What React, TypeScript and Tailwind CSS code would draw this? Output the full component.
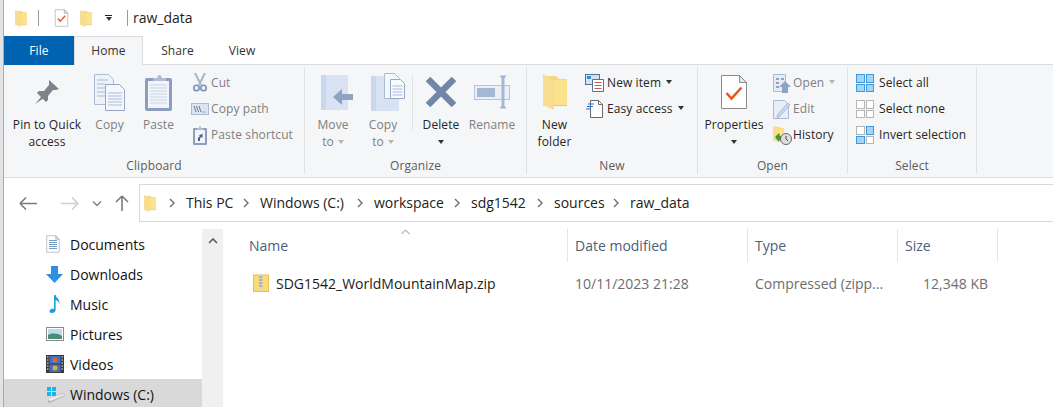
import React from 'react';

const Folder = ({ className }: { className: string }) => (
  <svg viewBox="0 0 24 36" className={className}>
    <path d="M0 2h13l3 3h8v27H0z" fill="#f6d67c" />
    <path d="M11 6h13v26H11z" fill="#fde28c" />
    <path d="M0 0l11 6v30L0 31z" fill="#f7dc91" />
    <path d="M11 31h13v1H11z" fill="#e9c568" />
  </svg>
);

const Doc = ({ className, children }: { className: string; children?: React.ReactNode }) => (
  <svg viewBox="0 0 28 36" className={className}>
    <path d="M1.5 1.5h18l7 7v26h-25z" fill="#fff" stroke="#8b8b8b" />
    <path d="M19.5 1.5v7h7z" fill="#e6e6e6" stroke="#8b8b8b" />
    {children}
  </svg>
);

const Check = ({ className }: { className: string }) => (
  <Doc className={className}>
    <path d="M6.5 19l5 5.5 10-11" fill="none" stroke="#e8591f" strokeWidth="2.6" />
  </Doc>
);

const Pin = () => (
  <svg viewBox="0 0 26 26" className="h-[26px] w-[26px]">
    <path d="M15 1l10 9-3 1-3 0-5 6 0 4-2 2-9-9 2-2 5 0 5-6 0-3z" fill="#7d838b" />
    <path d="M8 17l-7 8 9-6z" fill="#7d838b" />
  </svg>
);

const CopyIcon = () => (
  <svg viewBox="0 0 32 37" className="h-[37px] w-[32px]">
    <path d="M.5.5h14l5 5v25H.5z" fill="#eef2f9" stroke="#a9bbd6" />
    <path d="M11.5 10.5h14l5 5v21h-19z" fill="#f4f7fc" stroke="#93a8c7" />
    <path d="M3 6h11M3 10h8M3 14h8M3 18h8M3 22h8M14 19h14M14 22h14M14 25h14M14 28h14M14 31h14" stroke="#a9bbd6" strokeWidth="1" />
  </svg>
);

const Paste = () => (
  <svg viewBox="0 0 28 37" className="h-[37px] w-[28px]">
    <rect x="0" y="4" width="27" height="33" rx="2" fill="#8b9ec0" />
    <rect x="3" y="7" width="21" height="27" fill="#f2f4fa" />
    <path d="M5 11h17M5 14h17M5 17h17M5 20h17M5 23h17M5 26h17M5 29h17" stroke="#c6d3e8" />
    <path d="M8 7V4h4l1.500-3 2 0 1.500 3h4v3z" fill="#b0bdd4" />
  </svg>
);

const Scissors = () => (
  <svg viewBox="0 0 14 20" className="h-[20px] w-[14px]">
    <path d="M2 0l6 12M12 0L6 12" stroke="#a7b5cc" strokeWidth="2" />
    <circle cx="3.500" cy="15" r="2.700" fill="none" stroke="#7b91b4" strokeWidth="1.600" />
    <circle cx="10.500" cy="15" r="2.700" fill="none" stroke="#7b91b4" strokeWidth="1.600" />
  </svg>
);

const CopyPath = () => (
  <svg viewBox="0 0 18 12" className="h-[12px] w-[18px]">
    <rect x=".5" y=".5" width="17" height="11" fill="#dbe4f2" stroke="#a9bbd6" />
    <path d="M3 3l2 6M5.500 3l2 6M8 3l2 6" stroke="#5d6f8c" strokeWidth=".9" />
    <path d="M11.500 9h1M13.500 9h1" stroke="#5d6f8c" />
  </svg>
);

const PasteShortcut = () => (
  <svg viewBox="0 0 14 19" className="h-[19px] w-[14px]">
    <rect y="2" width="14" height="17" rx="1" fill="#8b9ec0" />
    <rect x="2" y="4" width="10" height="13" fill="#f2f4fa" />
    <path d="M4 2h2l.500-2h1l.500 2h2v2H4z" fill="#b0bdd4" />
    <path d="M5 15v-3l2-2H5.500L9.500 7.500V12L8 11l-1 1.500V15z" fill="#45608c" />
  </svg>
);

const MoveTo = () => (
  <svg viewBox="0 0 32 37" className="ml-[8px] h-[37px] w-[32px]">
    <path d="M0 1h27v35H0z" fill="#d8e2f2" />
    <path d="M0 1h5v35H0z" fill="#c9d7ec" />
    <path d="M32 20H21v-5L12 23l9 8v-5h11z" fill="#8ea2c2" />
  </svg>
);

const CopyTo = () => (
  <svg viewBox="0 0 34 39" className="ml-[9px] h-[39px] w-[34px]">
    <path d="M0 3h28v35H0z" fill="#d8e2f2" />
    <path d="M0 3h5v35H0z" fill="#c9d7ec" />
    <path d="M13.500 5.500V.5h10l5 5v20h-15z" fill="#f4f7fc" stroke="#a9bbd6" />
    <path d="M19.500 6.500h10l4 4v15h-14z" fill="#f8fafd" stroke="#93a8c7" />
    <path d="M21.500 13h10M21.500 16h10M21.500 19h10M21.500 22h10" stroke="#a9bbd6" />
  </svg>
);

const DeleteX = () => (
  <svg viewBox="0 0 32 32" className="h-[32px] w-[32px]">
    <path d="M3 3l26 26M29 3L3 29" stroke="#7287a8" strokeWidth="6.500" />
  </svg>
);

const Rename = () => (
  <svg viewBox="0 0 36 34" className="h-[34px] w-[36px]">
    <rect x=".5" y="10.500" width="35" height="14" fill="#eaf0f9" stroke="#b4c4dc" />
    <rect x="3" y="13" width="18" height="9" fill="#a6b7d3" />
    <path d="M26 1h6l-2 2v28l2 2h-6l2-2V3z" fill="#a6b7d3" stroke="#a6b7d3" />
  </svg>
);

const NewItem = () => (
  <svg viewBox="0 0 19 18" className="h-[18px] w-[19px]">
    <rect x=".5" y=".5" width="14" height="10" fill="#cfe3f7" stroke="#5b6f8e" />
    <rect x="2" y="2" width="4" height="3" fill="#2e8ed6" />
    <path d="M7.500 5.500h11v12h-11z" fill="#fff" stroke="#5b6f8e" />
    <path d="M9.500 8.500h7M9.500 11.500h7M9.500 14.500h7" stroke="#c45a5a" />
  </svg>
);

const EasyAccess = () => (
  <svg viewBox="0 0 17 18" className="h-[18px] w-[17px]">
    <path d="M4.500.5h8l4 4v13h-12z" fill="#fff" stroke="#6b6b6b" />
    <path d="M12.500.5v4h4" fill="none" stroke="#6b6b6b" />
    <path d="M2 4h6M1 6.500h6M0 9h5" stroke="#2a74c9" strokeWidth="1.200" />
  </svg>
);

const OpenIcon = () => (
  <svg viewBox="0 0 18 19" className="h-[19px] w-[18px]">
    <path d="M.5.500h12v17H.5z" fill="#e4ebf6" stroke="#a9bbd6" />
    <path d="M3 4h3v2H3zM8 4h3v2H8zM3 8h3v2H3zM3 12h3v2H3z" fill="#8ea2c2" />
    <path d="M12 7l6 6h-3v6H9v-6H6z" fill="#8ea2c2" />
  </svg>
);

const Edit = () => (
  <svg viewBox="0 0 18 19" className="h-[19px] w-[18px]">
    <path d="M.5.500h11l4 4v14H.5z" fill="#e8eef8" stroke="#a9bbd6" />
    <path d="M17 5L7 16l-3 2 1-4L15 3z" fill="#cdd9ec" stroke="#a9bbd6" />
  </svg>
);

const History = () => (
  <div className="relative h-[20px] w-[18px]">
    <Folder className="h-[18px] w-[11px]" />
    <svg viewBox="0 0 17 14" className="absolute bottom-0 left-[2px] h-[14px] w-[17px]">
      <path d="M0 6l4-4 1 3h3v3H5l-1 3z" fill="#3d9a36" />
      <circle cx="11" cy="8" r="5.500" fill="#dedede" stroke="#6a6a6a" />
      <path d="M11 5v3l2 2" fill="none" stroke="#444" />
    </svg>
  </div>
);

const SelectGrid = ({ cells }: { cells: boolean[] }) => (
  <div className="grid h-[18px] w-[18px] grid-cols-2 gap-[1px]">
    {cells.map((on, i) => (
      <div key={i} className={on ? 'border border-[#3f98dc] bg-[#a6d4f5]' : 'border border-[#b5b5b5] bg-white'} />
    ))}
  </div>
);

const Caret = ({ muted }: { muted?: boolean }) => (
  <span className={`inline-block h-0 w-0 border-x-[3.500px] border-t-[4px] border-x-transparent ${muted ? 'border-t-[#b5b5b5]' : 'border-t-[#333]'}`} />
);

const Large = ({
  w,
  icon,
  lines,
  muted,
}: {
  w: string;
  icon: React.ReactNode;
  lines: React.ReactNode[];
  muted?: boolean;
}) => (
  <div className={`flex shrink-0 flex-col items-center ${w} ${muted ? 'text-[#7f7f7f]' : 'text-[#262626]'}`}>
    <div className="flex h-[49px] w-full items-center justify-center pt-[1px]">{icon}</div>
    {lines.map((l, i) => (
      <div key={i} className="flex h-[17px] items-center gap-[4px] whitespace-nowrap leading-[17px]">
        {l}
      </div>
    ))}
  </div>
);

const Small = ({
  icon,
  label,
  muted,
  caret,
  iconW,
}: {
  icon: React.ReactNode;
  label: string;
  muted?: boolean;
  caret?: 'dark' | 'muted';
  iconW: string;
}) => (
  <div className={`flex h-[26px] items-center whitespace-nowrap ${muted ? 'text-[#7f7f7f]' : 'text-[#262626]'}`}>
    <div className={`flex shrink-0 items-center justify-center ${iconW}`}>{icon}</div>
    <span>{label}</span>
    {caret && (
      <span className="ml-[5px] flex items-center pb-[2px]">
        <Caret muted={caret === 'muted'} />
      </span>
    )}
  </div>
);

const Group = ({ w, label, children }: { w: string; label: string; children: React.ReactNode }) => (
  <div className={`flex h-[107px] shrink-0 flex-col border-r border-[#dfe1e3] ${w}`}>
    <div className="flex h-[91px] items-start">{children}</div>
    <div className="flex h-[16px] items-center justify-center leading-none text-[#5c5c5c]">{label}</div>
  </div>
);

const Chevron = () => (
  <svg viewBox="0 0 28 12" className="h-[12px] w-[28px] shrink-0">
    <path d="M12 2l4 4-4 4" fill="none" stroke="#6f6f6f" strokeWidth="1.400" />
  </svg>
);

const NavItem = ({ icon, label, active }: { icon: React.ReactNode; label: string; active?: boolean }) => (
  <div className={`flex h-[30px] items-center pl-[42px] text-[#111] ${active ? 'bg-[#d9d9d9]' : ''}`}>
    <div className="flex w-[24px] shrink-0 items-center">{icon}</div>
    {label}
  </div>
);

const crumbs = [
  { label: 'This PC', w: 'w-[46px]' },
  { label: 'Windows (C:)', w: 'w-[86px]' },
  { label: 'workspace', w: 'w-[69px]' },
  { label: 'sdg1542', w: 'w-[55px]' },
  { label: 'sources', w: 'w-[48px]' },
  { label: 'raw_data', w: 'w-[60px]' },
];

export default function App() {
  return (
    <div className="flex h-[407px] w-[1053px] overflow-hidden bg-white font-['Open_Sans','Noto_Sans',sans-serif] text-[12px] tracking-[0.1px]">
      {/* bit of the window behind */}
      <div className="w-[4px] shrink-0 border-r border-[#a9a9a9] bg-[#e3e3e3]" />
      <div className="flex min-w-0 flex-1 flex-col">
        {/* title bar */}
        <div className="flex h-[36px] shrink-0 items-center">
          <Folder className="ml-[11px] h-[17px] w-[12px]" />
          <div className="ml-[11px] h-[16px] w-px bg-[#9a9a9a]" />
          <Check className="ml-[15px] h-[18px] w-[15px]" />
          <Folder className="ml-[11px] h-[17px] w-[12px]" />
          <div className="ml-[13px] flex flex-col items-center gap-[1px]">
            <div className="h-px w-[7px] bg-[#222]" />
            <Caret />
          </div>
          <div className="ml-[15px] h-[16px] w-px bg-[#9a9a9a]" />
          <span className="ml-[5px] pb-[2px] text-[14px] tracking-normal text-[#222]">raw_data</span>
        </div>

        {/* tabs */}
        <div className="relative z-10 -mb-px flex h-[29px] shrink-0 text-[#333]">
          <div className="flex w-[70px] items-center justify-center bg-[#0063b1] text-white">File</div>
          <div className="flex w-[69px] items-center justify-center border-x border-t border-[#dadbdc] bg-[#f5f6f7]">Home</div>
          <div className="flex w-[69px] items-center justify-center">Share</div>
          <div className="flex w-[60px] items-center justify-center">View</div>
        </div>

        {/* ribbon */}
        <div className="flex h-[114px] shrink-0 items-start border-y border-[#dadbdc] bg-[#f5f6f7] pt-[2px]">
          <Group w="w-[301px]" label="Clipboard">
            <Large w="w-[86px]" icon={<Pin />} lines={['Pin to Quick', 'access']} />
            <Large w="w-[39px]" muted icon={<CopyIcon />} lines={['Copy']} />
            <Large w="w-[59px]" muted icon={<Paste />} lines={['Paste']} />
            <div className="mt-[3px] flex flex-col">
              <Small muted iconW="w-[23px]" icon={<Scissors />} label="Cut" />
              <Small muted iconW="w-[23px]" icon={<CopyPath />} label="Copy path" />
              <Small muted iconW="w-[23px]" icon={<PasteShortcut />} label="Paste shortcut" />
            </div>
          </Group>

          <Group w="w-[222px]" label="Organize">
            <Large
              w="w-[56px]"
              muted
              icon={<MoveTo />}
              lines={['Move', <React.Fragment key="t">to <Caret muted /></React.Fragment>]}
            />
            <Large
              w="w-[44px]"
              muted
              icon={<CopyTo />}
              lines={['Copy', <React.Fragment key="t">to <Caret muted /></React.Fragment>]}
            />
            <div className="ml-[7px] mr-[2px] mt-[8px] h-[55px] w-px bg-[#dfe1e3]" />
            <Large w="w-[52px]" icon={<DeleteX />} lines={['Delete', <Caret key="c" />]} />
            <Large w="w-[50px]" muted icon={<Rename />} lines={['Rename']} />
          </Group>

          <Group w="w-[171px]" label="New">
            <Large w="w-[55px]" icon={<Folder className="h-[36px] w-[24px]" />} lines={['New', 'folder']} />
            <div className="mt-[3px] flex flex-col">
              <Small iconW="w-[25px]" icon={<NewItem />} label="New item" caret="dark" />
              <Small iconW="w-[25px]" icon={<EasyAccess />} label="Easy access" caret="dark" />
            </div>
          </Group>

          <Group w="w-[150px]" label="Open">
            <Large w="w-[72px]" icon={<Check className="h-[36px] w-[28px]" />} lines={['Properties', <Caret key="c" />]} />
            <div className="mt-[3px] flex flex-col">
              <Small muted caret="muted" iconW="w-[23px]" icon={<OpenIcon />} label="Open" />
              <Small muted iconW="w-[23px]" icon={<Edit />} label="Edit" />
              <Small iconW="w-[23px]" icon={<History />} label="History" />
            </div>
          </Group>

          <Group w="w-[129px]" label="Select">
            <div className="mt-[3px] flex flex-col pl-[8px]">
              <Small iconW="w-[23px] justify-start" icon={<SelectGrid cells={[true, true, true, true]} />} label="Select all" />
              <Small iconW="w-[23px] justify-start" icon={<SelectGrid cells={[false, false, false, false]} />} label="Select none" />
              <Small iconW="w-[23px] justify-start" icon={<SelectGrid cells={[false, true, true, false]} />} label="Invert selection" />
            </div>
          </Group>
        </div>

        {/* address row */}
        <div className="flex h-[44px] shrink-0 items-end">
          <div className="flex h-[38px] w-[135px] shrink-0 items-center text-[#8a8a8a]">
            <svg viewBox="0 0 126 20" className="h-[20px] w-[126px]">
              <path d="M16 10.500H33M16 10.500l6-6M16 10.500l6 6" fill="none" stroke="#7a7a7a" strokeWidth="1.600" />
              <path d="M57 10.500h17M74 10.500l-6-6M74 10.500l-6 6" fill="none" stroke="#cfcfcf" strokeWidth="1.600" />
              <path d="M89 8.500l4 4 4-4" fill="none" stroke="#7a7a7a" strokeWidth="1.300" />
              <path d="M118 18V3M118 3l-6 6M118 3l6 6" fill="none" stroke="#7a7a7a" strokeWidth="1.600" />
            </svg>
          </div>
          <div className="flex h-[38px] flex-1 items-center border border-r-0 border-[#d9d9d9] pl-[4px] text-[14px] tracking-normal text-[#222]">
            <Folder className="h-[17px] w-[12px] shrink-0" />
            <div className="w-[2px]" />
            <Chevron />
            {crumbs.map((c, i) => (
              <React.Fragment key={c.label}>
                <span className={`shrink-0 whitespace-nowrap pb-[2px] ${c.w}`}>{c.label}</span>
                {i < crumbs.length - 1 && <Chevron />}
              </React.Fragment>
            ))}
          </div>
        </div>

        {/* main */}
        <div className="flex min-h-0 flex-1 text-[14px] tracking-normal">
          <div className="mt-[7px] w-[198px] shrink-0">
            <NavItem
              label="Documents"
              icon={
                <Doc className="h-[18px] w-[14px]">
                  <path d="M6 11h16M6 15h16M6 19h16M6 23h16M6 27h16" stroke="#4a7fb5" strokeWidth="1.500" />
                </Doc>
              }
            />
            <NavItem
              label="Downloads"
              icon={
                <svg viewBox="0 0 17 17" className="h-[17px] w-[17px]">
                  <path d="M5 0h7v8h5l-8.500 9L0 8h5z" fill="#2f8fe0" />
                </svg>
              }
            />
            <NavItem
              label="Music"
              icon={
                <svg viewBox="0 0 12 18" className="ml-[3px] h-[18px] w-[12px]">
                  <path d="M5 0h1.600c.5 3 4.400 4 3.900 9-.5-2-2-3.500-3.900-4v10c0 2-2 3-4 3S0 16.500 1 15c.8-1.200 2.500-1.500 4-1z" fill="#1c9be6" />
                </svg>
              }
            />
            <NavItem
              label="Pictures"
              icon={
                <svg viewBox="0 0 18 14" className="h-[14px] w-[18px]">
                  <rect x=".5" y=".5" width="17" height="13" fill="#fff" stroke="#8a8a8a" />
                  <rect x="2" y="2" width="14" height="10" fill="#bcd9ee" />
                  <path d="M2 8c4-2 9-2 14 1v3H2z" fill="#4e8a7a" />
                </svg>
              }
            />
            <NavItem
              label="Videos"
              icon={
                <svg viewBox="0 0 18 18" className="h-[18px] w-[18px]">
                  <rect width="18" height="18" fill="#3b3b3b" />
                  <rect x="3.500" y="1" width="11" height="7.500" fill="#3f6fc8" />
                  <rect x="3.500" y="9.500" width="11" height="7.500" fill="#3f6fc8" />
                  <circle cx="9" cy="5" r="2.500" fill="#d9682e" />
                  <circle cx="9" cy="13" r="2.500" fill="#d9b12e" />
                  <path d="M1 2h1.500M1 5h1.500M1 8h1.500M1 11h1.500M1 14h1.500M15.500 2H17M15.500 5H17M15.500 8H17M15.500 11H17M15.500 14H17" stroke="#eee" />
                </svg>
              }
            />
            <NavItem
              active
              label="Windows (C:)"
              icon={
                <svg viewBox="0 0 20 17" className="h-[17px] w-[20px]">
                  <path d="M1 1h4v4H1zM6 1h4v4H6zM1 6h4v4H1zM6 6h4v4H6z" fill="#19b4ea" />
                  <path d="M2 13l14-6 3 1v2L4 17H2z" fill="#bdbdbd" />
                  <path d="M2 13l14-5 3 1-15 6z" fill="#ececec" />
                </svg>
              }
            />
          </div>

          {/* nav scrollbar */}
          <div className="mt-[7px] flex w-[21px] shrink-0 justify-center bg-[#f0f0f0] pt-[9px]">
            <svg viewBox="0 0 10 6" className="h-[6px] w-[10px]">
              <path d="M1 5l4-4 4 4" fill="none" stroke="#5a5a5a" strokeWidth="1.600" />
            </svg>
          </div>

          {/* file list */}
          <div className="min-w-0 flex-1 pl-[2px] pt-[7px]">
            <div className="relative flex h-[33px] items-center text-[#4c607a]">
              <svg viewBox="0 0 10 6" className="absolute left-[175px] top-0 h-[6px] w-[11px]">
                <path d="M1 5l4-4 4 4" fill="none" stroke="#8a8a8a" strokeWidth="1" />
              </svg>
              <div className="flex h-full w-[343px] items-center border-r border-[#e5e5e5] pl-[24px]">Name</div>
              <div className="flex h-full w-[180px] items-center border-r border-[#e5e5e5] pl-[7px]">Date modified</div>
              <div className="flex h-full w-[150px] items-center border-r border-[#e5e5e5] pl-[7px]">Type</div>
              <div className="flex h-full w-[100px] items-center border-r border-[#e5e5e5] pl-[7px]">Size</div>
            </div>
            <div className="mt-[6px] flex h-[30px] items-center text-[#6d6d6d]">
              <div className="flex w-[343px] items-center pl-[28px] text-[#1b1b1b]">
                <svg viewBox="0 0 16 18" className="mr-[7px] h-[18px] w-[16px] shrink-0">
                  <rect x=".5" y="1" width="15" height="16.500" fill="#f9dc76" stroke="#e5c14f" />
                  <rect x="6" y="0" width="3.500" height="15" fill="#d6d6d6" />
                  <path d="M6 3h3.500M6 6h3.500M6 9h3.500M6 12h3.500" stroke="#8a8a8a" />
                </svg>
                SDG1542_WorldMountainMap.zip
              </div>
              <div className="w-[180px] pl-[7px]">10/11/2023 21:28</div>
              <div className="w-[150px] pl-[7px]">Compressed (zipp...</div>
              <div className="w-[90px] text-right">12,348 KB</div>
            </div>
          </div>
        </div>
      </div>
    </div>
  );
}
